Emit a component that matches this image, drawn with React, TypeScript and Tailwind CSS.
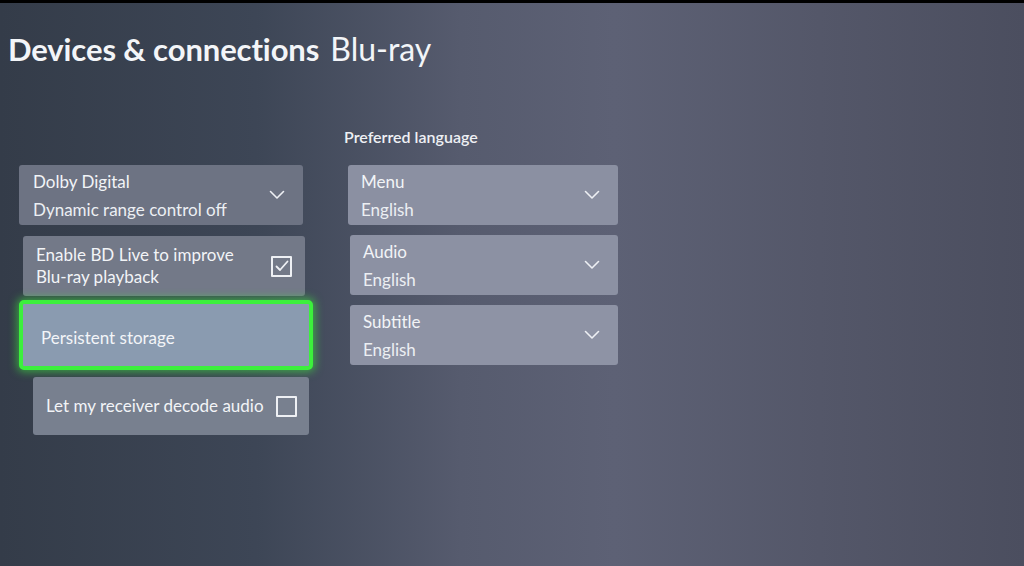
const font = { fontFamily: 'Lato, "Open Sans", sans-serif' };

function Chevron() {
  return (
    <svg width="16" height="10" viewBox="0 0 16 10" fill="none" className="shrink-0">
      <path d="M1.5 1.5 L8 8 L14.5 1.5" stroke="#eef0f4" strokeWidth="1.6" strokeLinecap="round" strokeLinejoin="round" />
    </svg>
  );
}

function Checkbox({ checked }: { checked?: boolean }) {
  return (
    <div className="w-[21px] h-[21px] border-2 border-[#eef0f4] rounded-[1px] flex items-center justify-center shrink-0">
      {checked && (
        <svg width="14" height="12" viewBox="0 0 14 12" fill="none">
          <path d="M1.5 6.5 L5 10 L12.5 1.5" stroke="#eef0f4" strokeWidth="1.8" strokeLinecap="round" strokeLinejoin="round" />
        </svg>
      )}
    </div>
  );
}

interface DropProps {
  label: string;
  value: string;
  className?: string;
}

function DropTile({ label, value, className = '' }: DropProps) {
  return (
    <div className={`h-[60px] rounded-[3px] flex items-center justify-between pl-[13px] pr-[18px] ${className}`}>
      <div className="flex flex-col leading-none">
        <span className="text-[17px] text-[#f2f4f7]">{label}</span>
        <span className="text-[17px] text-[#eceff3] mt-[11px]">{value}</span>
      </div>
      <Chevron />
    </div>
  );
}

export default function App() {
  return (
    <div
      className="w-[1024px] h-[566px] overflow-hidden relative border-t-[3px] border-black bg-[linear-gradient(90deg,#343c49_0%,#3d4656_25%,#565b6e_45%,#5d6175_60%,#545769_80%,#4b4e5f_100%)]"
      style={font}
    >
      {/* Header */}
      <div className="pl-[8px] pt-[30px] flex items-baseline gap-[11px] text-[#f3f5f8] leading-none">
        <h1 className="text-[31px] font-bold tracking-[-0.1px]">Devices &amp; connections</h1>
        <span className="text-[32px] font-normal">Blu-ray</span>
      </div>

      <div className="flex">
        {/* Left column */}
        <div className="w-[296px] ml-[19px] pt-[100px] flex flex-col">
          <DropTile label="Dolby Digital" value="Dynamic range control off" className="bg-[#6d7383] w-[284px] pl-[14px]" />

          <div className="h-[60px] w-[282px] ml-[4px] mt-[11px] rounded-[3px] bg-[#737988] flex items-center justify-between pl-[13px] pr-[13px]">
            <div className="flex flex-col text-[17px] leading-[22px] text-[#f2f4f7]">
              <span>Enable BD Live to improve</span>
              <span>Blu-ray playback</span>
            </div>
            <Checkbox checked />
          </div>

          <div className="h-[70px] w-[294px] mt-[4px] rounded-[5px] border-[4px] border-[#3cf03c] shadow-[0_0_8px_2px_rgba(60,230,60,0.6)] bg-[#8a9bb0] flex items-center pl-[18px] pt-[5px]">
            <span className="text-[17px] text-[#f3f5f8]">Persistent storage</span>
          </div>

          <div className="h-[58px] w-[276px] ml-[14px] mt-[7px] rounded-[3px] bg-[#78808f] flex items-center justify-between pl-[13px] pr-[12px]">
            <span className="text-[17px] text-[#f2f4f7]">Let my receiver decode audio</span>
            <Checkbox />
          </div>
        </div>

        {/* Right column */}
        <div className="ml-[33px] pt-[64px] flex flex-col">
          <div className="-ml-[4px] text-[16px] leading-none font-semibold text-[#eef0f4]">Preferred language</div>
          <div className="mt-[20px] flex flex-col gap-[10px] w-[270px]">
            <DropTile label="Menu" value="English" className="bg-[#8b90a2]" />
            <DropTile label="Audio" value="English" className="bg-[#8c91a3] ml-[2px]" />
            <DropTile label="Subtitle" value="English" className="bg-[#8e93a5] ml-[2px]" />
          </div>
        </div>
      </div>
    </div>
  );
}
